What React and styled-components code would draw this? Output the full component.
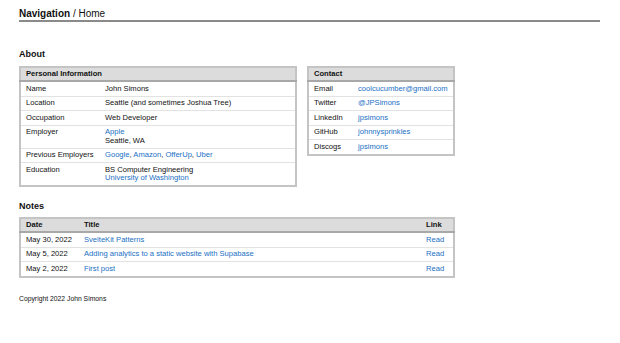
import React from 'react'
import styled, { createGlobalStyle } from 'styled-components'

const GlobalStyle = createGlobalStyle`
  body {
    margin: 0;
    background: #fff;
    font-family: "Liberation Sans", Arial, sans-serif;
    color: #111;
  }
`

const Page = styled.div`
  padding: 8px 20px 0 19px;
`

const NavBar = styled.div`
  font-size: 10px;
  line-height: 12px;
  border-bottom: 2px solid #8a8a8a;
`

const Strong = styled.span`
  font-weight: bold;
`

const SectionTitle = styled.h2`
  font-size: 9px;
  font-weight: bold;
  margin: ${props => props.top}px 0 ${props => props.bottom}px;
  line-height: 11px;
`

const Columns = styled.div`
  display: flex;
  align-items: flex-start;
  gap: 10px;
`

const Table = styled.table`
  width: ${props => props.width}px;
  border-collapse: collapse;
  border: 2px solid #c4c4c4;
  font-size: 7.6px;
  line-height: 8.5px;
`

const HeadCell = styled.th`
  background: #dcdcdc;
  text-align: left;
  font-weight: bold;
  padding: 2px 5px 1.5px;
  border-bottom: 2px solid #a8a8a8;
  width: ${props => (props.width ? `${props.width}px` : 'auto')};
`

const Row = styled.tr`
  border-top: 1px solid #e2e2e2;
`

const Cell = styled.td`
  padding: 2.5px 5px 2.5px;
  vertical-align: top;
  width: ${props => (props.width ? `${props.width}px` : 'auto')};
`

const Link = styled.a`
  color: #1a6fc4;
  text-decoration: none;
`

const Footer = styled.div`
  font-size: 6.8px;
  line-height: 9px;
  margin-top: 16px;
`

const personal = [
  ['Name', 'John Simons'],
  ['Location', 'Seattle (and sometimes Joshua Tree)'],
  ['Occupation', 'Web Developer'],
  ['Employer', <><Link href="#">Apple</Link><br />Seattle, WA</>],
  ['Previous Employers', <>
    <Link href="#">Google</Link>, <Link href="#">Amazon</Link>, <Link href="#">OfferUp</Link>, <Link href="#">Uber</Link>
  </>],
  ['Education', <>BS Computer Engineering<br /><Link href="#">University of Washington</Link></>],
]

const contact = [
  ['Email', 'coolcucumber@gmail.com'],
  ['Twitter', '@JPSimons'],
  ['LinkedIn', 'jpsimons'],
  ['GitHub', 'johnnysprinkles'],
  ['Discogs', 'jpsimons'],
]

const notes = [
  ['May 30, 2022', 'SvelteKit Patterns'],
  ['May 5, 2022', 'Adding analytics to a static website with Supabase'],
  ['May 2, 2022', 'First post'],
]

export default function App() {
  return (
    <>
      <GlobalStyle />
      <Page>
        <NavBar>
          <Strong>Navigation</Strong> / Home
        </NavBar>

        <SectionTitle top={27} bottom={6}>About</SectionTitle>
        <Columns>
          <Table width={278}>
            <thead>
              <tr><HeadCell colSpan={2}>Personal Information</HeadCell></tr>
            </thead>
            <tbody>
              {personal.map(([label, value]) => (
                <Row key={label}>
                  <Cell width={69}>{label}</Cell>
                  <Cell>{value}</Cell>
                </Row>
              ))}
            </tbody>
          </Table>
          <Table width={148}>
            <thead>
              <tr><HeadCell colSpan={2}>Contact</HeadCell></tr>
            </thead>
            <tbody>
              {contact.map(([label, value]) => (
                <Row key={label}>
                  <Cell width={34}>{label}</Cell>
                  <Cell><Link href="#">{value}</Link></Cell>
                </Row>
              ))}
            </tbody>
          </Table>
        </Columns>

        <SectionTitle top={14} bottom={5}>Notes</SectionTitle>
        <Table width={436}>
          <thead>
            <tr>
              <HeadCell width={48}>Date</HeadCell>
              <HeadCell>Title</HeadCell>
              <HeadCell width={22}>Link</HeadCell>
            </tr>
          </thead>
          <tbody>
            {notes.map(([date, title]) => (
              <Row key={date}>
                <Cell>{date}</Cell>
                <Cell><Link href="#">{title}</Link></Cell>
                <Cell><Link href="#">Read</Link></Cell>
              </Row>
            ))}
          </tbody>
        </Table>

        <Footer>Copyright 2022 John Simons</Footer>
      </Page>
    </>
  )
}
